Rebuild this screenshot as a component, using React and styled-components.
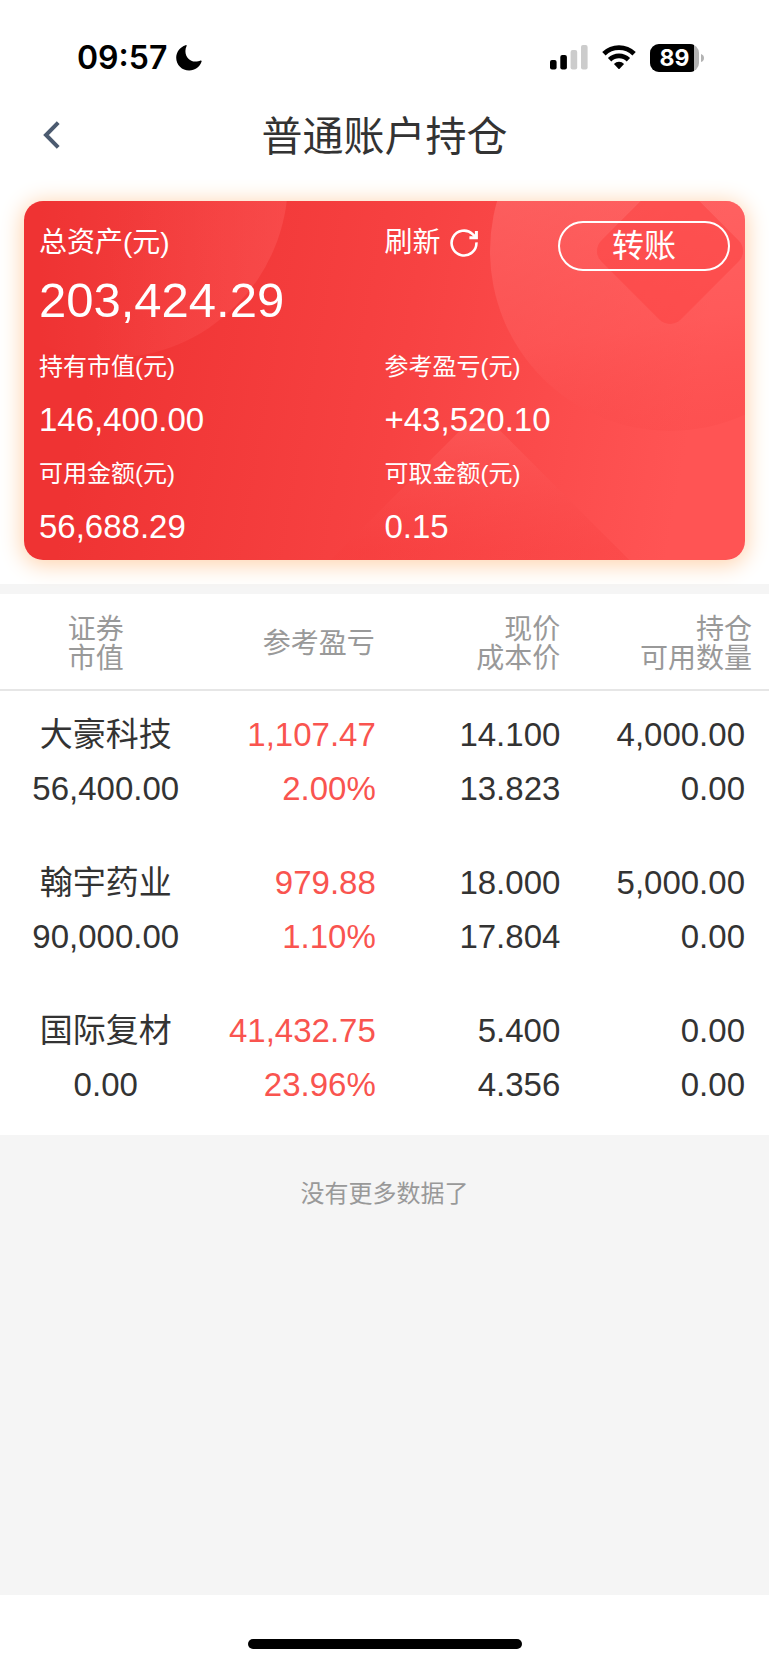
import styled, { createGlobalStyle } from 'styled-components';

const GlobalStyle = createGlobalStyle`
  * {
    box-sizing: border-box;
  }

  body {
    margin: 0;
    background: #ffffff;
    color: #333333;
    font-family: 'Liberation Sans', 'Noto Sans CJK SC', sans-serif;
  }

  button {
    padding: 0;
    border: none;
    background: none;
    color: inherit;
    font-family: inherit;
    cursor: pointer;
  }
`;

const Page = styled.div`
  display: flex;
  flex-direction: column;
  min-height: 100vh;
`;

const StatusBar = styled.div`
  display: flex;
  align-items: center;
  justify-content: space-between;
  height: 115px;
  padding: 0 65px 0 77px;
  color: #000000;
`;

const StatusGroup = styled.div`
  display: flex;
  align-items: center;
  gap: ${({ $gap }) => $gap}px;
`;

const Time = styled.span`
  font-family: Inter, sans-serif;
  font-size: 32px;
  font-weight: 600;
  line-height: 40px;
`;

const BatteryText = styled.text`
  fill: #ffffff;
  font-family: Inter, sans-serif;
  font-size: 23px;
  font-weight: 700;
  text-anchor: middle;
`;

const NavBar = styled.header`
  display: grid;
  grid-template-columns: 80px 1fr 80px;
  align-items: center;
  height: 44px;
`;

const BackButton = styled.button`
  display: flex;
  align-items: center;
  height: 44px;
  padding: 0 0 4px 43px;
`;

const Title = styled.h1`
  margin: 0;
  text-align: center;
  font-size: 41px;
  font-weight: 400;
  line-height: 44px;
`;

const Card = styled.section`
  position: relative;
  margin: 42px 24px 24px;
  padding: 20px 15px 6px;
  border-radius: 19px;
  background: linear-gradient(100deg, #ef3333 12%, #f74242 52%, #ff5454 90%);
  box-shadow: 0 3px 22px 2px #ffd3ad;
  color: #ffffff;
`;

const CardArt = styled.svg`
  position: absolute;
  inset: 0;
  width: 100%;
  height: 100%;
  border-radius: 19px;
`;

const CardBody = styled.div`
  position: relative;
`;

const CardTop = styled.div`
  display: grid;
  grid-template-columns: 1fr 1fr;
  align-items: start;
`;

const CardLabel = styled.div`
  font-size: 28px;
  line-height: 44px;
`;

const CardActions = styled.div`
  display: flex;
  align-items: flex-start;
  justify-content: space-between;
`;

const RefreshButton = styled.button`
  display: flex;
  align-items: center;
  gap: 9px;
  font-size: 28px;
  line-height: 44px;
`;

const TransferButton = styled.button`
  width: 172px;
  height: 50px;
  border: 2px solid #ffffff;
  border-radius: 25px;
  font-size: 32px;
  line-height: 46px;
`;

const Total = styled.div`
  margin-bottom: 11px;
  font-size: 49px;
  line-height: 58px;
`;

const Stats = styled.dl`
  display: grid;
  grid-template-columns: 1fr 1fr;
  margin: 0;
`;

const StatLabel = styled.dt`
  font-size: 24px;
  line-height: 54px;
`;

const StatValue = styled.dd`
  margin: 0;
  padding-bottom: 2px;
  font-size: 33px;
  line-height: 51px;
`;

const Holdings = styled.table`
  width: 100%;
  border-top: 10px solid #f5f5f5;
  border-spacing: 0;
  table-layout: fixed;
`;

const Col = styled.col`
  width: ${({ $width }) => $width};
`;

const HeadCell = styled.th`
  height: 97px;
  padding: 4px ${({ $right }) => $right}px 0 0;
  border-bottom: 2px solid #e6e6e6;
  color: #999999;
  text-align: ${({ $align }) => $align || 'right'};
  font-size: 28px;
  font-weight: 400;
  line-height: 29px;
`;

const Cell = styled.td`
  padding: 17px ${({ $right }) => $right}px 23px 0;
  color: ${({ $rise }) => ($rise ? '#f9544f' : '#333333')};
  text-align: ${({ $align }) => $align || 'right'};
  font-size: 33px;
  line-height: 54px;
`;

const Line = styled.div`
  white-space: nowrap;
`;

const Footer = styled.div`
  flex: 1;
  padding-top: 41px;
  background: #f5f5f5;
  color: #999999;
  text-align: center;
  font-size: 24px;
  line-height: 36px;
`;

const HomeArea = styled.div`
  display: flex;
  justify-content: center;
  height: 70px;
  padding-top: 44px;
`;

const HomeIndicator = styled.div`
  width: 274px;
  height: 10px;
  border-radius: 5px;
  background: #000000;
`;

const stats = [
  { label: '持有市值(元)', value: '146,400.00' },
  { label: '参考盈亏(元)', value: '+43,520.10' },
  { label: '可用金额(元)', value: '56,688.29' },
  { label: '可取金额(元)', value: '0.15' },
];

const columns = [
  { lines: ['证券', '市值'], width: '27.5%', align: 'center', headRight: 20, right: 0 },
  { lines: ['参考盈亏'], width: '21.5%', headRight: 2, right: 1 },
  { lines: ['现价', '成本价'], width: '24%', headRight: 1, right: 1 },
  { lines: ['持仓', '可用数量'], width: '27%', headRight: 17, right: 24 },
];

const holdings = [
  [['大豪科技', '56,400.00'], ['1,107.47', '2.00%'], ['14.100', '13.823'], ['4,000.00', '0.00']],
  [['翰宇药业', '90,000.00'], ['979.88', '1.10%'], ['18.000', '17.804'], ['5,000.00', '0.00']],
  [['国际复材', '0.00'], ['41,432.75', '23.96%'], ['5.400', '4.356'], ['0.00', '0.00']],
];

const MoonIcon = () => (
  <svg width="26" height="26" viewBox="0 0 26 26" aria-hidden="true">
    <path d="M9.6 0.2C10.3-.1 11 .3 10.6 1C9.8 2.6 9.4 4.2 9.4 6C9.4 12 13.6 16.6 19.4 16.6C21.4 16.6 23 16.2 24.6 15.6C25.3 15.3 25.8 15.9 25.6 16.6C23.8 22 19 25.6 13.2 25.6C6 25.6 0.2 20 0.2 12.8C0.2 7 4 2 9.6 0.2Z" />
  </svg>
);

const SignalIcon = () => (
  <svg width="38" height="25" viewBox="0 0 38 25" aria-hidden="true">
    <rect x="0" y="15" width="6.6" height="9.5" rx="2" />
    <rect x="10.3" y="10" width="6.6" height="14.5" rx="2" />
    <rect x="20.6" y="5" width="6.6" height="19.5" rx="2" fill="#cccccc" />
    <rect x="31" y="0" width="6.6" height="24.5" rx="2" fill="#cccccc" />
  </svg>
);

const WifiIcon = () => (
  <svg width="34" height="25" viewBox="0 0 34 25" aria-hidden="true">
    <g fill="none" stroke="#000000" strokeWidth="4.8">
      <path d="M1.9 8.7A21.6 21.6 0 0 1 32.1 8.7" />
      <path d="M7.6 14.8A13.4 13.4 0 0 1 26.4 14.8" />
    </g>
    <path d="M11.9 18.9A7.3 7.3 0 0 1 22.1 18.9L17.6 23.8Q17 24.4 16.4 23.8Z" />
  </svg>
);

const BatteryIcon = () => (
  <svg width="54" height="28" viewBox="0 0 54 28" aria-hidden="true">
    <clipPath id="charge">
      <rect width="44" height="28" />
    </clipPath>
    <rect width="49" height="28" rx="9" fill="#b3b3b3" />
    <rect width="49" height="28" rx="9" clipPath="url(#charge)" />
    <path d="M51 10Q54 11 54 14Q54 17 51 18Z" fill="#b3b3b3" />
    <BatteryText x="24.5" y="22">
      89
    </BatteryText>
  </svg>
);

const BackIcon = () => (
  <svg width="17" height="28" viewBox="0 0 17 28" fill="none" aria-hidden="true">
    <path d="M15.2 1.6L3 14L15.2 26.4" stroke="#4c5b70" strokeWidth="4" />
  </svg>
);

const RefreshIcon = () => (
  <svg width="28" height="28" viewBox="0 0 28 28" fill="none" aria-hidden="true">
    <path d="M26.4 13.4A12.4 12.4 0 1 1 22.6 5.1L25.6 8" stroke="#ffffff" strokeWidth="2.6" />
    <path d="M26.4 2V8.8H19.4" stroke="#ffffff" strokeWidth="3" />
  </svg>
);

const CardBackground = () => (
  <CardArt viewBox="0 0 721 359" preserveAspectRatio="xMidYMid slice" aria-hidden="true">
    <defs>
      <linearGradient id="leftCircle" x1="0.3" y1="0.6" x2="1" y2="0.6">
        <stop offset="0" stopColor="#ff6060" stopOpacity="0" />
        <stop offset="1" stopColor="#ff6060" stopOpacity="0.4" />
      </linearGradient>
      <linearGradient id="rightCircle" x1="0.4" y1="0" x2="0.55" y2="1">
        <stop offset="0.3" stopColor="#ff7070" stopOpacity="0.55" />
        <stop offset="0.7" stopColor="#ff6060" stopOpacity="0.45" />
        <stop offset="1" stopColor="#f84646" stopOpacity="0.25" />
      </linearGradient>
      <linearGradient id="diamond" x1="0" y1="0" x2="1" y2="1">
        <stop offset="0.05" stopColor="#ff6464" stopOpacity="0.45" />
        <stop offset="0.35" stopColor="#f63c3c" stopOpacity="0.3" />
      </linearGradient>
    </defs>
    <circle cx="86" cy="-21" r="178" fill="url(#leftCircle)" />
    <circle cx="646" cy="50" r="180" fill="url(#rightCircle)" />
    <rect
      x="590"
      y="-6"
      width="112"
      height="112"
      rx="15"
      transform="rotate(45 646 50)"
      fill="#fb4444"
      fillOpacity="0.55"
    />
    <rect
      x="315"
      y="268"
      width="282"
      height="282"
      rx="30"
      transform="rotate(45 456 409)"
      fill="url(#diamond)"
    />
  </CardArt>
);

const AccountCard = () => (
  <Card>
    <CardBackground />
    <CardBody>
      <CardTop>
        <CardLabel>总资产(元)</CardLabel>
        <CardActions>
          <RefreshButton type="button">
            刷新
            <RefreshIcon />
          </RefreshButton>
          <TransferButton type="button">转账</TransferButton>
        </CardActions>
      </CardTop>
      <Total>203,424.29</Total>
      <Stats>
        {stats.map(({ label, value }) => (
          <div key={label}>
            <StatLabel>{label}</StatLabel>
            <StatValue>{value}</StatValue>
          </div>
        ))}
      </Stats>
    </CardBody>
  </Card>
);

const HoldingsTable = () => (
  <Holdings>
    <colgroup>
      {columns.map((col, i) => (
        <Col key={i} $width={col.width} />
      ))}
    </colgroup>
    <thead>
      <tr>
        {columns.map((col, i) => (
          <HeadCell key={i} scope="col" $align={col.align} $right={col.headRight}>
            {col.lines.map(line => (
              <Line key={line}>{line}</Line>
            ))}
          </HeadCell>
        ))}
      </tr>
    </thead>
    <tbody>
      {holdings.map((row, r) => (
        <tr key={r}>
          {row.map((lines, i) => (
            <Cell key={i} $align={columns[i].align} $right={columns[i].right} $rise={i === 1}>
              {lines.map((line, n) => (
                <Line key={n}>{line}</Line>
              ))}
            </Cell>
          ))}
        </tr>
      ))}
    </tbody>
  </Holdings>
);

export default function App() {
  return (
    <Page>
      <GlobalStyle />
      <StatusBar>
        <StatusGroup $gap={9}>
          <Time>09:57</Time>
          <MoonIcon />
        </StatusGroup>
        <StatusGroup $gap={14}>
          <SignalIcon />
          <WifiIcon />
          <BatteryIcon />
        </StatusGroup>
      </StatusBar>
      <NavBar>
        <BackButton type="button" aria-label="返回">
          <BackIcon />
        </BackButton>
        <Title>普通账户持仓</Title>
      </NavBar>
      <AccountCard />
      <HoldingsTable />
      <Footer>没有更多数据了</Footer>
      <HomeArea>
        <HomeIndicator />
      </HomeArea>
    </Page>
  );
}
